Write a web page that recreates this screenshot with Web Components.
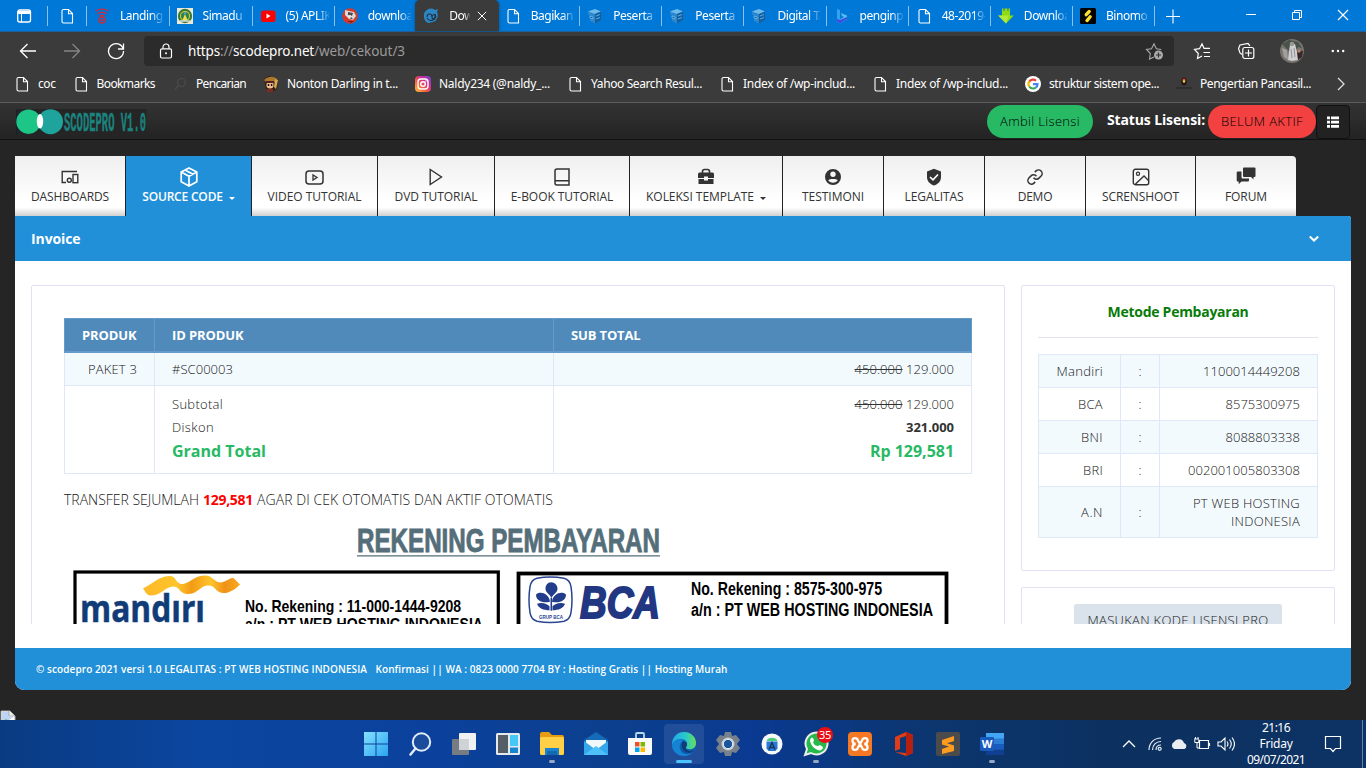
<!DOCTYPE html>
<html lang="id">
<head>
<meta charset="utf-8">
<title>Invoice - scodepro</title>
<style>
html,body{margin:0;width:1366px;height:768px;overflow:hidden;background:#252525}
body{font-family:"Open Sans","Noto Sans",sans-serif;font-size:13px;color:#333}
</style>
</head>
<body>
<desktop-screen></desktop-screen>
<script>
const define=(tag,html,setup)=>customElements.define(tag,class extends HTMLElement{
  connectedCallback(){
    if(this.shadowRoot)return;
    const t=document.createElement('template');
    t.innerHTML=typeof html==='function'?html(this):html;
    this.attachShadow({mode:'open'}).append(t.content.cloneNode(true));
    if(setup)setup(this);
  }
});

const doc='<path d="M4.5 1.5h5l4 4v9.5h-9a1.5 1.5 0 0 1-1.5-1.5V3a1.5 1.5 0 0 1 1.5-1.5zM9.500 1.700v4h3.800" fill="none" stroke="#fff" stroke-width="1.100"/>';
const cube='<path d="M1 3.500L8 1l6 2.500v8.500L8 15.500 3 13V8L1 6.500z" fill="#2a86cd"/><path d="M1 3.500l7 2.500 6-2.500L8 1z" fill="#6db9ec"/><path d="M8 6l6-2.500V12l-6 3.500z" fill="#135f9f"/><path d="M3 8l3 1v2l-3-1zM9 8l4-1.500M9 11l4-1.500" stroke="#6fc0f0" stroke-width=".8" fill="#11558f"/>';
const icons={
 doc:[16,doc],
 cube:[16,cube],
 pane:[16,'<rect x="1.700" y="2" width="12.800" height="12" rx="2" fill="none" stroke="#fff" stroke-width="1.300"/><path d="M2 3h12v3H2z" fill="#fff"/><path d="M5.500 6v8" stroke="#fff"/>'],
 landing:[16,'<g fill="none" stroke="#e0242c" stroke-width="1.200"><path d="M1.500 3Q8-1 14.500 3M3.500 5.800Q8 2.500 12.500 5.800M5.500 8.200Q8 6.500 10.500 8.200"/><circle cx="8" cy="12.200" r="3"/></g><circle cx="8" cy="12.200" r="1.300" fill="#e0242c"/>'],
 simadu:[16,'<rect width="16" height="16" fill="#eee9d8"/><circle cx="8" cy="8" r="7.200" fill="#3b7b35"/><circle cx="8" cy="8" r="5" fill="#d8d13d"/><circle cx="8" cy="8" r="4" fill="#2f7f55"/><path d="M8 6l2.500 6h-5z" fill="#e9e24a"/><circle cx="8" cy="5" r="1.300" fill="#4aa0c0"/><path d="M3 13h10" stroke="#ddd" stroke-width="1.500"/>'],
 youtube:[16,'<rect x="1" y="2.500" width="14.500" height="11.500" rx="2.500" fill="#f00"/><path d="M6.500 5.500v5l4-2.500z" fill="#fff"/>'],
 fox:[16,'<circle cx="8" cy="8" r="7.800" fill="#d43a2c"/><path d="M3 2l4 1 5 1 2 4-3 4-4-1-4-4z" fill="#dcd8d5"/><path d="M6 4l5 1-1 3-4-1z" fill="#4a4b50"/><circle cx="8" cy="8.500" r="1.500" fill="#eee"/><path d="M9 9l2 2-3-.5z" fill="#333"/><path d="M5 13l7 0-3 2z" fill="#842018"/>'],
 eye:[16,'<path d="M1 9a7 7 0 0 1 11-7l3-1-1 3a7 7 0 0 1-4 10l-5 1A7 7 0 0 1 1 9z" fill="#2c86c4"/><path d="M4 9c0-4 5-4 5 0s5 1 3-3M4 10c2 4 8 3 9-2M9 9c0-2 3-4 3-1" fill="none" stroke="#252f3a" stroke-width="1.100"/>'],
 bing:[16,'<path d="M3 1l3 1.200v9L10 9 8 8 7 5l6 2.500v3.700L6 15.500 3 13.500z" fill="#51bdf0"/><path d="M3 1l3 1.200v11L3 12z" fill="#38a0ea"/><path d="M3 11l3 1 7-3v2L6 15.500 3 13.500z" fill="#3e4ce0"/>'],
 down:[16,'<path d="M4 .5h8v7h3.800L8 15.500.2 7.500H4z" fill="#8edb13"/><path d="M6 0v3M10 0v3" stroke="#2575ad"/><path d="M8 15.500L.2 7.500H4l7 0z" fill="#b1e83a"/>'],
 binomo:[16,'<rect width="16" height="16" rx="1.500" fill="#000"/><path d="M6.200 6.700l3-3.200M7 12.600l3.200-3.800" stroke="#ffdd2e" stroke-width="3.300" stroke-linecap="round"/>'],
 search2:[16,'<circle cx="9.500" cy="6.500" r="4" fill="none" stroke="#4c4c4c" stroke-width="1.200"/><path d="M6.500 9.500L3 13.500" stroke="#4c4c4c" stroke-width="1.400"/>'],
 luffy:[16,'<path d="M1 3l4-3 7 1 3 4-1 8-5 3-6-3z" fill="#352016"/><path d="M1 4c4-4 10-4 13-1l-2 3H3z" fill="#a9772f"/><circle cx="7" cy="9" r="3.600" fill="#f0bd91"/><path d="M3 5h8v2H3z" fill="#5a1f1c"/><circle cx="5.500" cy="9" r=".9" /><circle cx="8.600" cy="9" r=".9"/><path d="M12 3l3 1-2 9-2-2z" fill="#d0aa59"/><path d="M4 13h6v3H4z" fill="#7d2a22"/>'],
 insta:[16,'<defs><linearGradient id="a" x1="0" y1="1" x2="1" y2="0"><stop stop-color="#ffcb3c"/><stop offset=".35" stop-color="#f8613c"/><stop offset=".65" stop-color="#d12c91"/><stop offset="1" stop-color="#6546db"/></linearGradient></defs><rect width="16" height="16" rx="4" fill="url(#a)"/><g fill="none" stroke="#fff" stroke-width="1.400"><rect x="3" y="3" width="10" height="10" rx="3"/><circle cx="8" cy="8" r="2.300"/></g><circle cx="11" cy="5" r=".7" fill="#fff"/>'],
 google:[16,'<circle cx="8" cy="8" r="8" fill="#fff"/><g fill="none" stroke-width="2.200"><path d="M4.300 5.500A4.500 4.500 0 0 1 11 4.700" stroke="#ea4335"/><path d="M4.300 5.400a4.500 4.500 0 0 0 0 5.100" stroke="#fbbc05"/><path d="M4.300 10.500a4.500 4.500 0 0 0 6.600 1" stroke="#34a853"/><path d="M10.900 11.500A4.500 4.500 0 0 0 12.500 8.200H8" stroke="#4285f4"/></g>'],
 egg:[16,'<path d="M0 11.500h16v1H0z" fill="#222"/><ellipse cx="8" cy="5.500" rx="2.800" ry="4" fill="#261614"/><circle cx="8" cy="4" r="1.600" fill="#d9522b"/><circle cx="8" cy="5.500" r="1.200" fill="#d8dd65"/>'],
 back:[18,'<path d="M17 9H1.500M8.500 2l-7 7 7 7" fill="none" stroke="#fff" stroke-width="1.300"/>'],
 forward:[18,'<path d="M1 9h15.500M9.500 2l7 7-7 7" fill="none" stroke="#858585" stroke-width="1.300"/>'],
 reload:[18,'<path d="M16.200 7A7.500 7.500 0 1 0 16.500 9M16.500 1.500V7H11" fill="none" stroke="#fff" stroke-width="1.300"/>'],
 lock:[16,'<rect x="2.500" y="5.800" width="11" height="9.200" rx="1.500" fill="none" stroke="#fff" stroke-width="1.200"/><path d="M5 5.500V4a3 3 0 0 1 6 0v1.500" fill="none" stroke="#fff" stroke-width="1.200"/><circle cx="8" cy="10.300" r="1" fill="#fff"/>'],
 staradd:[18,'<path d="M9 15l-4.500 2 .8-5.500L1.500 7.500l5-.8L9 1.800l2.300 4.900 5 .8" fill="none" stroke="#aaa" stroke-width="1.100"/><circle cx="13.500" cy="13" r="4.500" fill="#aaa"/><path d="M11 13h5M13.500 10.500v5" stroke="#333" stroke-width="1.200"/>'],
 starlist:[18,'<path d="M9 14l-4.500 2.500.8-5L1.500 7.500l5-.8L9 1.800l2 4.500h6M10.500 10.500H17M11 14.500h6" fill="none" stroke="#fff" stroke-width="1.200"/>'],
 collect:[18,'<path d="M5 12.500L3 11 1.500 6.500 3 3l8-1.500 2 2.300" fill="none" stroke="#fff" stroke-width="1.200"/><rect x="5.800" y="5.500" width="11" height="11" rx="2" fill="none" stroke="#fff" stroke-width="1.200"/><path d="M8 11h7M11.500 7.500v7" stroke="#fff" stroke-width="1.200"/>'],
 avatar:[24,'<circle cx="12" cy="12" r="12" fill="#77736d"/><path d="M2 5l7-4 9 2 4 6-4-1-2 3-7 1z" fill="#48534b"/><path d="M10 6l5-1 2 8 1 8-6 1-4-1 1-9z" fill="#d0d0d2"/><circle cx="12" cy="5" r="2.300" fill="#9c9890"/><path d="M2 9l5 2 1 10-4-3z" fill="#a29fa0"/><path d="M17 11l6 1-1 6-4 3z" fill="#36272a"/><circle cx="19" cy="12" r="1.800" fill="#b4816c"/><path d="M11 10l1 9M14 9l1 9" stroke="#8f9398"/>'],
 dots:[18,'<g fill="#fff"><circle cx="3.800" cy="9" r="1.200"/><circle cx="9" cy="9" r="1.200"/><circle cx="14.200" cy="9" r="1.200"/></g>'],
 list:[14,'<g fill="#fff"><path d="M1 1.500h3v2.700H1zM5 1.500h8v2.700H5zM1 5.800h3v2.700H1zM5 5.800h8v2.700H5zM1 10h3v2.700H1zM5 10h8v2.700H5z"/></g>'],
 devices:[18,'<g fill="none" stroke="#333" stroke-width="1.400"><path d="M16 3.500H1.200v11H5"/><circle cx="8.300" cy="12.300" r="2"/><rect x="12" y="6.500" width="4.800" height="8.200"/></g>'],
 box:[20,'<path d="M10 1l7.800 4v9.700L10 19l-7.800-4.300V5zM2.200 5L10 9.200 17.800 5M10 9v10M6 3l8 4.300" fill="none" stroke="#fff" stroke-width="1.700"/>'],
 video:[19,'<rect x="1" y="3" width="17" height="13" rx="3" fill="none" stroke="#333" stroke-width="1.500"/><path d="M8 7v5l4-2.500z" fill="none" stroke="#333" stroke-width="1.300"/>'],
 play:[18,'<path d="M3.200 1.500v15L14.500 9z" fill="none" stroke="#333" stroke-width="1.400"/>'],
 book:[18,'<path d="M4 1h12v16H4a2 2 0 0 1-2-2V3a2 2 0 0 1 2-2zM2 12.800h14" fill="none" stroke="#333" stroke-width="1.500"/>'],
 case:[18,'<path d="M5.500 5V3.500a2 2 0 0 1 2-2h3a2 2 0 0 1 2 2V5" fill="none" stroke="#333" stroke-width="1.600"/><path d="M2.500 4.500h13A1.500 1.500 0 0 1 17 6v4h-6V8.500H7V10H1V6a1.500 1.500 0 0 1 1.500-1.500zM1.500 11H7v1.500h4V11h5.500v5h-15z" fill="#333"/>'],
 user:[18,'<path fill-rule="evenodd" fill="#333" d="M9 1a8 8 0 1 0 0 16A8 8 0 0 0 9 1zm0 2.500a2.700 2.700 0 1 1 0 5.400 2.700 2.700 0 0 1 0-5.400zM4.200 12.300C5.500 10.500 12.500 10.500 13.800 12.300 12 15.600 6 15.600 4.200 12.300z"/>'],
 shield:[18,'<path d="M9 .8l7 2.700V9c0 4.500-3 7-7 8.500C5 16 2 13.500 2 9V3.500z" fill="#333"/><path d="M5 9l3 2.800L13 6.500" fill="none" stroke="#fff" stroke-width="1.700"/>'],
 link:[18,'<path transform="translate(.4 .4) scale(.717)" d="M10 13a5 5 0 0 0 7.540.54l3-3a5 5 0 0 0-7.070-7.070l-1.720 1.710M14 11a5 5 0 0 0-7.540-.54l-3 3a5 5 0 0 0 7.070 7.070l1.710-1.710" fill="none" stroke="#333" stroke-width="2.100"/>'],
 image:[18,'<rect x="1.300" y="1.300" width="15.400" height="15.400" rx="2" fill="none" stroke="#333" stroke-width="1.400"/><circle cx="6" cy="5.800" r="1.600" fill="none" stroke="#333" stroke-width="1.200"/><path d="M3.500 16L12 8l4.500 4.500" fill="none" stroke="#333" stroke-width="1.400"/>'],
 chat:[20,'<path d="M8 .5h10.500a1 1 0 0 1 1 1V9a1 1 0 0 1-1 1h-1v2.500L15 10H8a1 1 0 0 1-1-1V1.500a1 1 0 0 1 1-1zM5.500 4.500H1.700a1 1 0 0 0-1 1v8a1 1 0 0 0 1 1h1v2.800l2.800-2.800H12a1 1 0 0 0 1-1v-2H6.500a1 1 0 0 1-1-1z" fill="#333"/>'],
 chevdown:[12,'<path d="M1.800 3.500L6 7.500l4.200-4" fill="none" stroke="#fff" stroke-width="2.100"/>'],
 chevright:[14,'<path d="M4 1l6 6-6 6" fill="none" stroke="#ddd" stroke-width="1.300"/>'],
 plus:[16,'<path d="M1 8.500h14M8 1.500v14" stroke="#fff" stroke-width="1.100"/>'],
 min:[12,'<path d="M1 5.500h10" stroke="#fff"/>'],
 restore:[12,'<path d="M1.500 3.500h7v7h-7zM3.500 3.500v-2h7v7h-2" fill="none" stroke="#fff"/>'],
 close:[12,'<path d="M1 1l10 10M11 1L1 11" stroke="#fff" stroke-width="1.200"/>'],
 broken:[16,'<path d="M1 1h9l5 5v9H1z" fill="#fff" stroke="#a9adb3"/><path d="M2 2h7v5h4l-5 4-6 2z" fill="#bed4f4"/><path d="M2 14l4-5 4 3 2 2z" fill="#5caa44"/><path d="M9 1v5h6" fill="#eee" stroke="#a9adb3"/>'],
 start:[24,'<defs><linearGradient id="s" x2="1" y2="1"><stop stop-color="#84e1ff"/><stop offset="1" stop-color="#2aa4f0"/></linearGradient></defs><path d="M0 0h11.500v11.500H0zM12.500 0H24v11.500H12.500zM0 12.500h11.500V24H0zM12.500 12.500H24V24H12.500z" fill="url(#s)"/>'],
 find:[24,'<circle cx="13.500" cy="10" r="8.700" fill="#2b569b" fill-opacity=".5" stroke="#e1edf8" stroke-width="2"/><path d="M7.500 16.500L2.500 22.500" stroke="#e1edf8" stroke-width="2.500" stroke-linecap="round"/>'],
 views:[24,'<rect x="0" y="7" width="17" height="16" rx="1" fill="#777b82"/><rect x="7" y="1" width="17" height="17" rx="1" fill="#f0f1f2"/><path d="M7 7h10v11H7z" fill="#cfd2d6"/>'],
 widgets:[24,'<rect x="0" y="1" width="24" height="22" rx="1.500" fill="#e5e9ed"/><path d="M2 3h10v18H2z" fill="#555d66"/><path d="M14 3h8v11h-8z" fill="#43c9f4"/><path d="M14 15.500h8V21h-8z" fill="#1686d3"/>'],
 folder:[26,'<path d="M1 3a2 2 0 0 1 2-2h7l3 3h10a2 2 0 0 1 2 2v4H1z" fill="#e79b13"/><rect x="1" y="6" width="24" height="18" rx="1.500" fill="#ffcf45"/><path d="M6 24v-7h14v7z" fill="#1783d1"/><path d="M8 20h10v4H8z" fill="#116aaf"/>'],
 mail:[26,'<path d="M1 9L13 1l12 8v15H1z" fill="#146bb8"/><path d="M3 9h20v9l-10 4-10-4z" fill="#f2f7fa"/><path d="M1 10l12 9 12-9v14H1z" fill="#35a8ed"/><path d="M1 24l12-9 12 9z" fill="#4fc0f8"/>'],
 store:[26,'<path d="M9 8V3a1 1 0 0 1 1-1h6a1 1 0 0 1 1 1v5" fill="none" stroke="#b8d7ed" stroke-width="1.800"/><path d="M1 7h24v15a2 2 0 0 1-2 2H3a2 2 0 0 1-2-2z" fill="#fafafa"/><path d="M8 11h4.500v4.500H8z" fill="#f25022"/><path d="M13.500 11H18v4.500h-4.500z" fill="#7fba00"/><path d="M8 16.500h4.500V21H8z" fill="#00a4ef"/><path d="M13.500 16.500H18V21h-4.500z" fill="#ffb900"/>'],
 edge:[26,'<defs><linearGradient id="e" x2="1"><stop stop-color="#21a8e9"/><stop offset=".55" stop-color="#28c8cc"/><stop offset="1" stop-color="#67dd5b"/></linearGradient><linearGradient id="f" y2="1" x2="0"><stop stop-color="#1378ce"/><stop offset="1" stop-color="#0b51a2"/></linearGradient></defs><circle cx="13" cy="13" r="12" fill="url(#f)"/><path d="M1 14C1 5 7 1 13 1c8 0 12 6 12 11 0 5-4 7-8 6-3-.5-2-2-1-4 1-3-2-6-6-6-5 0-8 3-9 6z" fill="url(#e)"/><path d="M1 14c2-5 7-7 11-4-5 2-4 9 0 12 4 2 8 1 11-2-3 4-7 5-10 5C6 25 1 20 1 14z" fill="#1684d5"/><path d="M12 10c-3 4-1 9 3 11 3 1 6 1 8-1-5 1-9-1-8-4 2-2 1-5-3-6z" fill="#113b77"/>'],
 gear:[26,'<path d="M10 1h6l1 4 4-1 4 5-3 4 3 4-4 5-4-1-1 4h-6l-1-4-4 1-4-5 3-4-3-4 4-5 4 1z" fill="#78818b"/><circle cx="13" cy="13" r="6.500" fill="#c8ced4"/><circle cx="13" cy="13" r="4.700" fill="#1b559e" stroke="#eef2f5"/>'],
 android:[26,'<circle cx="13" cy="13" r="10.500" fill="#f6f8f9"/><path d="M7.500 10.500h11v7l-2 2.500h-7l-2-2.500z" fill="#2879d5"/><path d="M7.500 10c1-4.500 10-4.500 11 0z" fill="#48cc7b"/><path d="M10 18.500l3-7 3 7M10.500 16.500h5" fill="none" stroke="#16355d" stroke-width="1.400"/>'],
 whatsapp:[26,'<path d="M2 24l2-6A11 11 0 1 1 8 22z" fill="#25b84b" stroke="#eee" stroke-width="2"/><path d="M8 7c2-2 3 2 3 3l-1 1c1 3 3 4 5 4l2-1 3 2c0 3-3 4-5 3-4-1-8-6-8-10z" fill="#fff"/>'],
 xampp:[26,'<rect x="1" y="1" width="24" height="24" rx="4" fill="#f57824"/><path d="M11 9.500C10 6 5.500 6.500 5.500 9.500S8.500 13 8.500 13 5.500 13.500 5.500 16.500 10 20 11 16.500L15 9.500C16 6 20.500 6.500 20.500 9.500S17.500 13 17.500 13s3 .5 3 3.500-4.500 3.500-5.500 0z" fill="none" stroke="#fff" stroke-width="2.300"/>'],
 office:[26,'<path d="M4 6l11-5 7 3v18l-7 3-11-4 11 1V5L9 7v11l-5 2z" fill="#e03c19"/><path d="M15 1l7 3v18l-7 3V5z" fill="#b71f0f"/>'],
 sublime:[26,'<rect x="1" y="1" width="24" height="24" rx="2" fill="#4b4b4b"/><path d="M7 9l12-4v5l-7 2.300 7 2.200v5.500L7 23v-5l7-2.500-7-2z" fill="#ff9c20"/>'],
 word:[26,'<rect x="7" y="2" width="18" height="22" rx="2" fill="#2b7cd3"/><path d="M7 2h18v5.500H7z" fill="#42a5f5"/><path d="M7 13h18v5.500H7z" fill="#185abd"/><path d="M7 18.500h18V24H7z" fill="#103f91"/><rect x="1" y="6" width="14" height="14" rx="1" fill="#185abd"/><text x="8" y="17" text-anchor="middle" font-family="Open Sans" font-weight="700" font-size="11" fill="#fff">W</text>'],
 up:[14,'<path d="M1 10l6-6 6 6" fill="none" stroke="#fff" stroke-width="1.300"/>'],
 wifi:[16,'<g fill="none" stroke="#e7edf4" stroke-width="1.200"><path d="M2 14C2 7 7 2 14 2M5.500 14C5.500 9 9 5.500 14 5.500M9 14c0-3 2-5 5-5"/><circle cx="12.700" cy="12.800" r="1.500"/></g>'],
 cloud:[18,'<path d="M4.500 14a3.800 3.800 0 0 1-.5-7 5.500 5.500 0 0 1 10 1 3.200 3.200 0 0 1 .5 6z" fill="#e9edf1"/>'],
 battery:[17,'<path d="M5.500 4.500h9v8h-9zM15.500 7v3" fill="none" stroke="#fff" stroke-width="1.200"/><path d="M0 3h5M1.500 1v2M4 1v2M.8 3.500v3h4v-3M3 6.500V12h3" fill="none" stroke="#fff"/>'],
 volume:[18,'<path d="M1 7h3l4-4v12l-4-4H1zM10 6.500q2 2.500 0 5M12.500 4.500q3.500 4.500 0 9M15 2.500q5 6.500 0 13" fill="none" stroke="#fff" stroke-width="1.100"/>'],
 note:[18,'<path d="M1.500 1.500h15v12h-5l-2.500 3-2.500-3h-5z" fill="none" stroke="#fff" stroke-width="1.200"/>']
};
define('ui-icon',el=>{
  const [v,body]=icons[el.getAttribute('name')];const s=el.getAttribute('size')||v;
  return `<style>:host{display:block;flex:none;width:${s}px;height:${s}px}svg{display:block}</style><svg width="${s}" height="${s}" viewBox="0 0 ${v} ${v}">${body}</svg>`;
});

/* Text run spaced to a known advance width, given in the w attribute. */
define('fit-text','<style>:host{display:inline-block;white-space:nowrap}</style><span><slot></slot></span>',el=>{
  const w=+el.getAttribute('w');if(!w)return;
  const n=el.textContent.length,span=el.shadowRoot.querySelector('span');
  const nat=span.getBoundingClientRect().width;
  span.style.letterSpacing=((w-nat)/n).toFixed(3)+'px';
  el.style.width=w+'px';
});

define('browser-tab',el=>`<style>
:host{display:flex;align-items:center;box-sizing:border-box;flex:none;width:82.150px;height:31px;padding-left:7px;position:relative;color:#fff;font-size:12px}
:host::after{content:"";position:absolute;right:0;top:6px;height:20px;width:1px;background:#8cc1ee}
:host([active]){width:84px;background:#3b3b3b;border-radius:5px 5px 0 0;padding-left:8px;box-shadow:0 0 3px #0005}
:host([active])::after,:host([nosep])::after{display:none}
.t{margin-left:10px;width:43px;overflow:hidden;white-space:nowrap;letter-spacing:-.45px;-webkit-mask:linear-gradient(90deg,#000 72%,#0002)}
:host([active]) .t{width:21px}
.x{margin-left:7px}
</style><ui-icon name="${el.getAttribute('icon')}"></ui-icon><div class="t"><slot></slot></div>${el.hasAttribute('active')?'<ui-icon class="x" name="close" size="10"></ui-icon>':''}`);

define('bookmark-item',el=>`<style>:host{display:flex;align-items:center;gap:8px;color:#fff;font-size:12px;flex:none}</style>
<ui-icon name="${el.getAttribute('icon')}"></ui-icon><fit-text w="${el.getAttribute('w')}">${el.textContent}</fit-text>`);

define('browser-chrome',`<style>
:host{display:block;font-family:"Noto Sans","Open Sans",sans-serif;background:#3b3b3b;height:102px;border-bottom:1px solid #5c5c5c}
.tabs{display:flex;height:32px;background:#0078d7;align-items:center;border-bottom:1px solid #1c5f9a;box-sizing:border-box}
.pin{width:47px;display:flex;justify-content:center;border-right:1px solid #8cc1ee;height:20px;align-items:center}
.pin+.pin{width:38px}
.plus{margin-left:9.500px}
.win{display:flex;gap:34px;margin:-2px 17px 0 auto}
.bar{display:flex;align-items:center;height:38px}
.url{margin-left:19px;width:1030px;height:30px;box-sizing:border-box;background:#2b2b2b;border-radius:4px;display:flex;align-items:center;padding:0 11px 0 14px;font-size:14px;color:#9a9a9a}
.url b{font-weight:400;color:#fff}.url div{margin-left:14px;margin-right:auto;font-size:13.500px}
.marks{display:flex;align-items:center;gap:17px;padding-left:14px;height:27px}
.end{margin-left:auto;margin-right:18px}
</style>
<div class="tabs"><div class="pin"><ui-icon name="pane"></ui-icon></div><div class="pin"><ui-icon name="doc"></ui-icon></div>
<browser-tab icon="landing" style="width:82.500px">Landing</browser-tab><browser-tab icon="simadu" style="width:83px">Simadu P</browser-tab><browser-tab icon="youtube">(5) APLIKASI</browser-tab><browser-tab icon="fox" nosep style="width:80.500px">download</browser-tab><browser-tab icon="eye" active>Down</browser-tab><browser-tab icon="doc" style="width:81px;padding-left:5.500px">Bagikan</browser-tab><browser-tab icon="cube">Peserta |</browser-tab><browser-tab icon="cube">Peserta |</browser-tab><browser-tab icon="cube">Digital Tal</browser-tab><browser-tab icon="bing">penginpu</browser-tab><browser-tab icon="doc">48-2019-</browser-tab><browser-tab icon="down">Download</browser-tab><browser-tab icon="binomo">Binomo</browser-tab>
<ui-icon class="plus" name="plus"></ui-icon>
<div class="win"><ui-icon name="min"></ui-icon><ui-icon name="restore"></ui-icon><ui-icon name="close"></ui-icon></div></div>
<div class="bar"><ui-icon name="back" style="margin-left:19px"></ui-icon><ui-icon name="forward" style="margin-left:26px"></ui-icon><ui-icon name="reload" style="margin-left:26px"></ui-icon>
<div class="url"><ui-icon name="lock"></ui-icon><div><fit-text w="32"><b>https</b></fit-text><fit-text w="13">://</fit-text><fit-text w="81"><b>scodepro.net</b></fit-text><fit-text w="91">/web/cekout/3</fit-text></div><ui-icon name="staradd"></ui-icon></div>
<ui-icon name="starlist" style="margin-left:19px"></ui-icon><ui-icon name="collect" style="margin-left:26px"></ui-icon><ui-icon name="avatar" style="margin-left:25px"></ui-icon><ui-icon name="dots" style="margin-left:25px"></ui-icon></div>
<div class="marks"><bookmark-item icon="doc" w="17.500">coc</bookmark-item><bookmark-item icon="doc" w="58.500">Bookmarks</bookmark-item><bookmark-item icon="search2" w="50">Pencarian</bookmark-item><bookmark-item icon="luffy" w="111">Nonton Darling in t...</bookmark-item><bookmark-item icon="insta" w="111">Naldy234 (@naldy_...</bookmark-item><bookmark-item icon="doc" w="111">Yahoo Search Resul...</bookmark-item><bookmark-item icon="doc" w="112">Index of /wp-includ...</bookmark-item><bookmark-item icon="doc" w="112">Index of /wp-includ...</bookmark-item><bookmark-item icon="google" w="110">struktur sistem ope...</bookmark-item><bookmark-item icon="egg" w="111">Pengertian Pancasil...</bookmark-item><ui-icon class="end" name="chevright"></ui-icon></div>`);

define('site-header',`<style>
:host{display:flex;box-sizing:border-box;height:37px;padding:2px 16px 0 15px;background:linear-gradient(#333,#232323);border-bottom:1px solid #111;align-items:flex-start}
.logo{display:block;margin-right:auto}
.pill{height:33px;border-radius:17px;display:flex;align-items:center;justify-content:center;color:#000;font-weight:350;line-height:16px;padding-bottom:1px;box-sizing:border-box}
.go{width:106px;background:#28b965}.no{width:108px;background:#f34141}
.s{color:#fff;font-weight:700;font-size:14px;margin:5px 3px 0 14px;line-height:20px}
.m{box-sizing:border-box;width:34px;height:34px;border:1px solid #111;border-radius:4px;background:#222;display:flex;align-items:center;justify-content:center}
</style>
<svg class="logo" width="134" height="33" viewBox="0 0 134 33"><rect x="1.500" y="4" width="130" height="26" fill="#252525"/><path d="M1.500 5v24" stroke="#171b3c"/><circle cx="35.500" cy="16.700" r="12.500" fill="#1fa39d"/><circle cx="13.500" cy="16.700" r="12.200" fill="#1dc586"/><ellipse cx="25" cy="16.300" rx="3.200" ry="7.200" fill="#fff"/><text x="49" y="25.500" textLength="82" lengthAdjust="spacingAndGlyphs" font-family="Liberation Mono" font-weight="700" font-size="27" fill="#1b827e" stroke="#1b827e" stroke-width=".4">SCODEPRO V1.0</text></svg>
<div class="pill go"><fit-text w="80">Ambil Lisensi</fit-text></div><div class="s"><fit-text w="98">Status Lisensi:</fit-text></div><div class="pill no"><fit-text w="82">BELUM AKTIF</fit-text></div><div class="m"><ui-icon name="list"></ui-icon></div>`);

define('nav-item',el=>`<style>
:host{display:flex;flex-direction:column;align-items:center;box-sizing:border-box;height:60px;padding-top:11px;border-right:1px solid #222;font-size:12px;color:#333;background:linear-gradient(#efefef,#fff 75%,#fff 86%,#d0d0d0);width:${el.getAttribute('size')}px;flex:none}
:host([active]){background:#2190d9;color:#fff;font-weight:600}
:host(:first-child){border-top-left-radius:4px}:host(:last-child){border-top-right-radius:4px;border-right:0}
.i{height:20px;display:flex;align-items:center}.l{display:flex;align-items:center;height:18px;line-height:18px;margin-top:1px}
.c{margin:3px 0 0 6px;border:3px solid transparent;border-top-color:currentColor;border-bottom:0}
</style><div class="i"><ui-icon name="${el.getAttribute('icon')}"></ui-icon></div><div class="l"><fit-text w="${el.getAttribute('w')}">${el.textContent}</fit-text>${el.hasAttribute('menu')?'<span class="c"></span>':''}</div>`);

define('site-nav',`<style>:host{display:flex;margin:16px 0 0 15px}</style>
<nav-item icon="devices" size="111" w="78">DASHBOARDS</nav-item><nav-item icon="box" size="126" w="80.500" active menu>SOURCE CODE</nav-item><nav-item icon="video" size="126" w="94">VIDEO TUTORIAL</nav-item><nav-item icon="play" size="117" w="83">DVD TUTORIAL</nav-item><nav-item icon="book" size="135" w="102.500">E-BOOK TUTORIAL</nav-item><nav-item icon="case" size="153" w="108" menu>KOLEKSI TEMPLATE</nav-item><nav-item icon="user" size="101" w="62">TESTIMONI</nav-item><nav-item icon="shield" size="101" w="59">LEGALITAS</nav-item><nav-item icon="link" size="101" w="34.500">DEMO</nav-item><nav-item icon="image" size="110" w="77">SCRENSHOOT</nav-item><nav-item icon="chat" size="100" w="42">FORUM</nav-item>`);

define('box-card','<style>:host{display:block;box-sizing:border-box;border:1px solid #e0e2f3;border-radius:2px;background:#fff}</style><slot></slot>');

define('order-table',`<style>
:host{display:block}
.r{display:grid;grid-template-columns:90px 399px 1fr;border:1px solid #e0e8f8;border-top:0;box-sizing:border-box;height:33px}
.r>div{box-sizing:border-box;padding:0 17px;display:flex;flex-direction:column;justify-content:center;border-right:1px solid #e0e8f8}
.r>div:last-child{border-right:0;align-items:flex-end}
.r.h{height:35px;background:#4f8aba;border:1px solid #669ac9;border-bottom-width:2px;color:#fff;font-weight:700}
.h>div{border-color:#669ac9}.r.h>div:last-child{align-items:flex-start}
.a{background:#f3fafe}.r.b{height:88px;line-height:23px}.b .e{justify-content:flex-start;padding-top:7px}
.r>.p{align-items:flex-end}.g{font-size:16px;font-weight:700;color:#28b965;line-height:25px}
del{text-decoration-color:#333}b{font-weight:700;color:#333}
</style>
<div class="r h"><div><fit-text w="54.500">PRODUK</fit-text></div><div><fit-text w="71.500">ID PRODUK</fit-text></div><div><fit-text w="69.500">SUB TOTAL</fit-text></div></div>
<div class="r a"><div class="p"><fit-text w="49">PAKET 3</fit-text></div><div><fit-text w="61">#SC00003</fit-text></div><div><fit-text w="99.500"><del>450.000</del> 129.000</fit-text></div></div>
<div class="r b"><div></div><div class="e"><fit-text w="51">Subtotal</fit-text><fit-text w="42">Diskon</fit-text><span class="g"><fit-text w="94">Grand Total</fit-text></span></div><div class="e"><fit-text w="99.500"><del>450.000</del> 129.000</fit-text><b><fit-text w="48">321.000</fit-text></b><span class="g"><fit-text w="84">Rp 129,581</fit-text></span></div></div>`);

define('bank-table',el=>{
 const rows=[['Mandiri',46.5,'1100014449208',97],['BCA',25,'8575300975',74.5],['BNI',22,'8088803338',74.5],['BRI',20,'002001005803308',112]];
 return `<style>:host{display:block;border:1px solid #dee8f8}
.r{display:grid;grid-template-columns:82px 39px 1fr;height:33px;box-sizing:border-box;border-bottom:1px solid #dee8f8;line-height:18px}
.r:nth-of-type(odd){background:#f3fafe}.r:last-child{height:50px;border:0}
.r>div{border-right:1px solid #dee8f8;display:flex;align-items:center;justify-content:flex-end;padding-right:17px;text-align:right}
.r>div:nth-child(2){padding:0;justify-content:center}.r>div:last-child{border:0;padding-right:17px}
</style>`+rows.map(r=>`<div class="r"><div><fit-text w="${r[1]}">${r[0]}</fit-text></div><div>:</div><div><fit-text w="${r[3]}">${r[2]}</fit-text></div></div>`).join('')+'<div class="r"><div><fit-text w="22">A.N</fit-text></div><div>:</div><div><span><fit-text w="107">PT WEB HOSTING</fit-text><br><fit-text w="69">INDONESIA</fit-text></span></div></div>';
});

define('bank-banner',`<style>:host{display:block}svg{display:block}</style>
<svg width="908" height="114" viewBox="64 511 908 114" font-family="Liberation Sans, Arial, sans-serif" font-weight="700">
<text x="357" y="551.500" font-size="33.500" fill="#546e7a" stroke="#546e7a" stroke-width=".9" textLength="303" lengthAdjust="spacingAndGlyphs">REKENING PEMBAYARAN</text>
<path d="M357 555.800h303" stroke="#546e7a" stroke-width="1.200"/>
<g fill="none" stroke="#000"><rect x="75" y="572" width="423.300" height="90" stroke-width="3.200"/><rect x="518.500" y="573.500" width="428" height="90" stroke-width="3.800"/></g>
<defs><linearGradient id="w"><stop stop-color="#fdb927"/><stop offset=".35" stop-color="#fec52c"/><stop offset=".5" stop-color="#f39b16"/><stop offset=".7" stop-color="#fec52c"/><stop offset=".84" stop-color="#f19118"/><stop offset="1" stop-color="#f8aa1e"/></linearGradient></defs>
<path d="M143 588.500C153 583.500 159 576.500 169 576C177 575.500 175 584.500 183 584C191 582.500 194 575.500 206 575.500C214 576.500 214 582.500 221 582.500C227 581.500 231 576.500 234 578.500L240 584.500C234 590.500 228 593.500 223 593C215 592.500 216 585.500 208 585.500C200 585.500 198 594.500 187 594C179 593.500 180 586.500 173 586.500C164 587.500 161 595.500 151 595.500C146 595.500 145 590.500 143 588.500Z" fill="url(#w)"/>
<text x="80" y="621.500" font-family="Open Sans, sans-serif" font-size="37" fill="#103c78" stroke="#103c78" stroke-width=".5" textLength="125" lengthAdjust="spacingAndGlyphs">mandırı</text>
<g font-size="17" fill="#000"><text x="245" y="611.500" textLength="216" lengthAdjust="spacingAndGlyphs">No. Rekening : 11-000-1444-9208</text><text x="245" y="630" textLength="238" lengthAdjust="spacingAndGlyphs">a/n : PT WEB HOSTING INDONESIA</text>
<text x="691" y="594.500" font-size="18" textLength="191" lengthAdjust="spacingAndGlyphs">No. Rekening : 8575-300-975</text><text x="691" y="615.500" font-size="18" textLength="242" lengthAdjust="spacingAndGlyphs">a/n : PT WEB HOSTING INDONESIA</text></g>
<g transform="translate(0 .7)"><path d="M537 577.500Q550 575 564 577.500Q570 579 571 586Q573 599 571 612Q570 619 564 620.500Q550 623 537 620.500Q531 619 530 612Q528 599 530 586Q531 579 537 577.500Z" fill="#fff" stroke="#29458f" stroke-width="1.500"/>
<g fill="#223d8c"><path d="M551 581.500c4 0 6.500 3 6.500 6.500 0 4-4 5-6 9-2-4-6-5-6-9 0-3.500 2-6.500 5.500-6.500z"/><path d="M536 594c3-4 13-2 14 7-7 2-14-1-14-7zM566 594c-3-4-13-2-14 7 7 2 14-1 14-7zM537 603c5-2 10 0 12.500 2.500v4c-6 0-11-2-12.500-6.500zM565 603c-5-2-10 0-12.500 2.500v4c6 0 11-2 12.500-6.500z"/><path d="M550.500 597h1.600v13h-1.600z"/></g>
<text x="539" y="618.500" font-size="6" fill="#29458f" textLength="24" lengthAdjust="spacingAndGlyphs">GRUP BCA</text></g>
<text x="580" y="617.500" font-size="45" font-style="italic" fill="#223782" stroke="#223782" stroke-width="2" textLength="80" lengthAdjust="spacingAndGlyphs">BCA</text>
</svg>`);

define('invoice-panel',`<style>
:host{display:block;margin:0 15px;width:1336px;background:#fff;border-radius:0 3px 9px 9px;overflow:hidden}
header{height:45px;background:#2190d9;color:#fff;font-weight:700;font-size:14px;display:flex;justify-content:space-between;align-items:center;padding:0 31px 0 16px}
main{display:flex;gap:16px;padding:24px 16px 0;height:339px;overflow:hidden;align-items:flex-start;margin-bottom:24px;font-weight:350;color:#161616}
.left{width:974px;height:500px;padding:32px}
p{margin:15px 0 0;font-size:14px;line-height:22px;display:flex;gap:4px}p b{color:red;font-weight:700}
.side{display:flex;flex-direction:column;gap:16px;width:314px}
.pay{height:286px;padding:16px}.pay h4{margin:0 0 16px;text-align:center;font-size:14px;font-weight:700;color:#087b08;line-height:20px;padding-bottom:15px;border-bottom:1px solid #e2e2e8}
.lic{height:200px;padding-top:16px}.btn{width:208px;height:32px;margin:auto;display:flex;align-items:center;justify-content:center;background:#dae3ec;border-radius:2px}
footer{height:42px;background:#2190d9;color:#fff;font-size:10px;font-weight:600;display:flex;align-items:center;gap:8.500px;padding:0 21px}
</style>
<header><fit-text w="49.500">Invoice</fit-text><ui-icon name="chevdown"></ui-icon></header>
<main><box-card class="left"><order-table></order-table><p><fit-text w="135">TRANSFER SEJUMLAH</fit-text><b><fit-text w="50">129,581</fit-text></b><fit-text w="296">AGAR DI CEK OTOMATIS DAN AKTIF OTOMATIS</fit-text></p><bank-banner></bank-banner></box-card>
<div class="side"><box-card class="pay"><h4><fit-text w="141">Metode Pembayaran</fit-text></h4><bank-table></bank-table></box-card><box-card class="lic"><div class="btn"><fit-text w="181">MASUKAN KODE LISENSI PRO</fit-text></div></box-card></div></main>
<footer><fit-text w="331">© scodepro 2021 versi 1.0 LEGALITAS : PT WEB HOSTING INDONESIA</fit-text><fit-text w="352">Konfirmasi || WA : 0823 0000 7704 BY : Hosting Gratis || Hosting Murah</fit-text></footer>`);

define('task-item',el=>`<style>:host{display:flex;width:44px;height:48px;align-items:center;justify-content:center;position:relative;flex:none}
.bg{width:40px;height:40px;border-radius:4px;display:flex;align-items:center;justify-content:center}
:host([active]) .bg{background:#ffffff17}
:host([open])::after,:host([active])::after{content:"";position:absolute;bottom:5px;left:19px;width:6px;height:3px;border-radius:2px;background:#97a9c6}
:host([active])::after{width:16px;left:14px;background:#4cc2ff}
.n{position:absolute;left:23px;top:7px;width:16px;height:16px;border-radius:8px;background:#e90f16;color:#fff;font:11px/16px "Noto Sans";text-align:center;letter-spacing:-.3px}</style>
<div class="bg"><ui-icon name="${el.getAttribute('icon')}"></ui-icon></div>${el.hasAttribute('count')?`<span class="n">${el.getAttribute('count')}</span>`:''}`);

define('task-bar',`<style>
:host{display:flex;height:48px;align-items:center;background:linear-gradient(90deg,#0a3b82 0,#0b46a0 15%,#0b419c 32%,#0c3f8d 45%,#0a3a91 55%,#0c366f 68%,#0c3160 82%,#0d3365 100%);color:#fff;font:12px/16px "Noto Sans","Open Sans",sans-serif}
.apps{display:flex;margin-left:354px}
.tray{display:flex;align-items:center;gap:7px;margin-left:auto}
.clock{width:70px;text-align:center;margin-left:2px;margin-right:13px}
.clock fit-text{display:block;margin:auto;height:16px}
.edge{width:1px;height:48px;margin-left:20px;margin-right:3px;background:#6781a4}
</style><div class="apps"><task-item icon="start"></task-item><task-item icon="find"></task-item><task-item icon="views"></task-item><task-item icon="widgets"></task-item><task-item icon="folder" open></task-item><task-item icon="mail"></task-item><task-item icon="store"></task-item><task-item icon="edge" active></task-item><task-item icon="gear"></task-item><task-item icon="android"></task-item><task-item icon="whatsapp" open count="35"></task-item><task-item icon="xampp"></task-item><task-item icon="office"></task-item><task-item icon="sublime"></task-item><task-item icon="word" open></task-item></div>
<div class="tray"><ui-icon name="up"></ui-icon><ui-icon name="wifi" style="margin-left:4px"></ui-icon><ui-icon name="cloud"></ui-icon><ui-icon name="battery" style="margin-left:-1px"></ui-icon><ui-icon name="volume" style="margin-left:-1px;margin-right:4px"></ui-icon></div>
<div class="clock"><fit-text w="28">21:16</fit-text><fit-text w="33">Friday</fit-text><fit-text w="58">09/07/2021</fit-text></div><ui-icon name="note"></ui-icon><div class="edge"></div>`);

define('desktop-screen',`<style>:host{display:flex;flex-direction:column;width:1366px;height:768px;background:#252525}
.broken{margin:20px 0 -6px;height:16px;flex:none}task-bar{flex:none;position:relative}</style>
<browser-chrome></browser-chrome><site-header></site-header><site-nav></site-nav><invoice-panel></invoice-panel><ui-icon class="broken" name="broken"></ui-icon><task-bar></task-bar>`);
</script>
</body>
</html>
